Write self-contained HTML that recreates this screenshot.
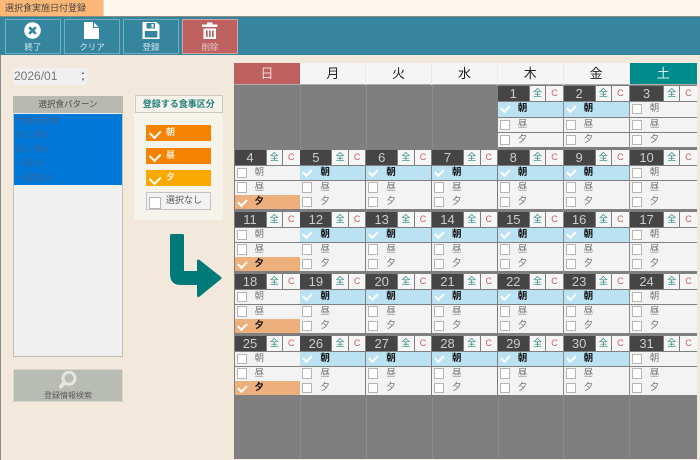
<!DOCTYPE html>
<html lang="ja"><head><meta charset="utf-8"><title>選択食実施日付登録</title>
<style>
*{box-sizing:border-box;margin:0;padding:0}
html,body{width:700px;height:460px;overflow:hidden}
body{position:relative;background:#f2e9dc;font-family:"Liberation Sans","Noto Sans CJK JP",sans-serif;font-size:10px;color:#555}
.abs,.btn,.d,.hd{position:absolute}
#top{position:absolute;left:0;top:0;width:700px;height:16px;background:#fdf9ee}
#tab{position:absolute;left:0;top:0;width:104px;height:16px;background:#fdb877;border-right:1px solid #e8d8c0;font-size:9px;line-height:16px;padding-left:5px;color:#444}
#bar{position:absolute;left:0;top:16px;width:700px;height:39px;background:#35859e;border-top:1px solid #8b8b83}
.btn{top:19px;width:56px;height:35px;border:1px solid #72aebd;color:#d5e8ee;font-size:8.500px;text-align:center;padding-top:22px;line-height:11px}
.btn svg{position:absolute;left:0;top:0}
#lft{position:absolute;left:0;top:55px;width:1px;height:405px;background:#8b8b83}
#date{left:13px;top:68px;width:74px;height:17px;background:#f0f0f0;font-size:12px;line-height:17px;padding-left:1px;color:#777}
#spin{left:80px;top:68px;width:6px;height:17px;font-size:5px;line-height:7px;color:#666;text-align:center;padding-top:2px}
#lh{left:13px;top:96px;width:110px;height:17px;background:#b8bab2;font-size:8.500px;line-height:17px;text-align:center;color:#4f4f4f}
#ls{left:13px;top:113px;width:110px;height:243.500px;background:#f0f0f0;border:1px solid #c4c0b6;border-top:0}
#sel{left:14px;top:113.500px;width:108px;height:71.500px;background:#0078d7;color:#33659f;font-size:9px;line-height:14.300px;padding-left:1px}
#srch{left:13px;top:369px;width:110px;height:33px;background:#b9bcb4;border:1px solid #d8d6cb;text-align:center;font-size:8px;color:#5c5c5c;padding-top:20px;line-height:11px}
#pn{left:134px;top:95px;width:89px;height:125px;background:#f6f3ea}
#pt{left:134.500px;top:95px;width:88.500px;height:18px;background:#f5f3ea;border:1px solid #c9c9c2;color:#227f7b;font-weight:bold;font-size:9px;line-height:16px;text-align:center}
.mb{left:146px;width:65px;height:16px;background:#f58300;color:#fdeed8;font-size:9px;line-height:15px;padding-left:20px;font-weight:bold}
.mb:before{content:"";position:absolute;left:3.500px;top:4.700px;width:8px;height:5.500px;border:solid #fff;border-width:0 0 2.500px 2.500px;transform:rotate(-45deg)}
#no{left:146px;top:192px;width:65px;height:17.500px;background:#f2f2f2;border:1px solid #c4c4c4;color:#555;font-size:9px;line-height:15px;padding-left:19px}
#no:before{content:"";position:absolute;left:2px;top:4px;width:9.500px;height:9.500px;background:#fff;border:1px solid #b5b5b5}
#cal{left:234px;top:85px;width:463px;height:374px;background:#7f7f7f}
.v{position:absolute;top:85px;height:374px;width:1px;background:#8c8c8c}
.hd{top:63px;width:65px;height:22px;background:#f5f5f5;border-bottom:1px solid #aaa;color:#222;font-size:13px;line-height:21px;text-align:center}
.d{width:65px;height:61px;background:#7f7f7f}
.d b,.d i,.d u,.d p{position:absolute;font-style:normal;text-decoration:none}
.d b{left:0;top:0;width:31px;height:15px;background:#454545;color:#ccc;font-weight:normal;font-size:13px;line-height:15px;text-align:center}
.d i,.d u{top:0;height:15px;background:#f6f6f6;font-size:9px;line-height:15px;text-align:center}
.d i{left:32px;width:15.500px;color:#24857f}
.d u{left:48.500px;width:16.500px;color:#c9605f}
.d p{left:0;width:65px;height:14px;background:#f3f3f3;color:#777;font-size:9.500px;line-height:14px;padding-left:20px}
.d p:nth-of-type(1){top:16px}.d p:nth-of-type(2){top:30.700px}.d p:nth-of-type(3){top:45.300px}
.r0 p:nth-of-type(1){height:15px}.r0 p:nth-of-type(2){top:32px}.r0 p:nth-of-type(3){top:47px}
.d s{position:absolute;left:2px;top:1.500px;width:10px;height:10.500px;background:#fff;border:1px solid #b5b5b5;text-decoration:none}
.wk p:nth-of-type(1),.sun p:nth-of-type(3){color:#111;font-weight:bold}
.wk p:nth-of-type(1){background:#bbe2f2}
.sun p:nth-of-type(3){background:#edb07c}
.wk p:nth-of-type(1) s,.sun p:nth-of-type(3) s{background:none;border:solid #fff;border-width:0 0 2.700px 2.700px;width:8.500px;height:6px;top:3.300px;left:3px;transform:rotate(-45deg)}
.c0{left:234.500px}.c1{left:300.400px}.c2{left:366.200px}.c3{left:432px}.c4{left:497.800px}.c5{left:563.600px}.c6{left:629.800px;width:67px}
.c6 b{width:33.500px}.c6 i{left:34.200px}.c6 u{left:50.300px;width:16.700px}.c6 p{width:67px}
.r0{top:86px}.r1{top:150px}.r2{top:212px}.r3{top:274px}.r4{top:336px}
</style></head><body>
<div id="top"></div><div id="tab">選択食実施日付登録</div>
<div id="bar"></div><div id="lft"></div>
<div class="btn" style="left:5px"><svg width="54" height="33"><circle cx="26.500" cy="10.500" r="8.300" fill="#fff"/><path d="M23.200 7.200l6.600 6.600M29.800 7.200l-6.600 6.600" stroke="#35859e" stroke-width="2.600"/></svg>終了</div>
<div class="btn" style="left:64px"><svg width="54" height="33"><path d="M19 2h9.500L34 7.500V19H19z" fill="#fff"/><path d="M28.500 2V7.500H34" fill="none" stroke="#35859e" stroke-width="1"/></svg>クリア</div>
<div class="btn" style="left:123px"><svg width="54" height="33"><path d="M18.500 2h14l3 3v14h-17z" fill="#fff"/><path d="M20.800 11h12.500v6.500H20.800z" fill="#35859e"/><path d="M22.500 3h8.500v5.500h-8.500z" fill="#35859e"/><path d="M27.500 4h2v3.500h-2z" fill="#fff"/></svg>登録</div>
<div class="btn" style="left:182px;background:#bf6060;border-color:#d9a0a0;color:#e8c8c8"><svg width="54" height="33"><path d="M19 4.500h15.500v2.500H19zM24 2.500h5.500v2H24zM20.500 8.500h12.500V19H20.500z" fill="#fff"/><path d="M23 10.500h1.700v6.500H23zM26 10.500h1.700v6.500H26zM29 10.500h1.700v6.500H29z" fill="#bf6060"/></svg>削除</div>
<div class="abs" id="date">2026/01</div><div class="abs" id="spin">▴<br>▾</div>
<div class="abs" id="ls"></div><div class="abs" id="lh">選択食パターン</div>
<div class="abs" id="sel">学齢前期食<br>成人食B<br>成人食A<br>一般16<br>一般塩16</div>
<div class="abs" id="srch"><svg class="abs" style="left:45px;top:1px" width="20" height="20"><circle cx="10" cy="7.300" r="6" fill="none" stroke="#e6e6e0" stroke-width="3"/><path d="M5 12l-3 3.500" stroke="#e6e6e0" stroke-width="4" stroke-linecap="round"/></svg>登録情報検索</div>
<div class="abs" id="pn"></div><div class="abs" id="pt">登録する食事区分</div>
<div class="abs mb" style="top:124.500px">朝</div><div class="abs mb" style="top:147.500px">昼</div><div class="abs mb" style="top:170px;background:#f9a800">夕</div>
<div class="abs" id="no">選択なし</div>
<svg class="abs" style="left:0;top:0" width="234" height="310"><path d="M171.500 235.500H182.500V272.500H198.500V261L220 278L198.500 295.500V283.500H181Q171.500 283.500 171.500 274Z" fill="#007a78" stroke="#007a78" stroke-width="3" stroke-linejoin="round"/></svg>
<div class="abs" id="cal"></div>
<div class="v" style="left:300px"></div><div class="v" style="left:366px"></div><div class="v" style="left:432px"></div><div class="v" style="left:498px"></div><div class="v" style="left:563px"></div><div class="v" style="left:629px"></div>
<div class="hd c0" style="left:234px;width:66px;background:#bf6060;color:#f0d8d8">日</div><div class="hd c1">月</div><div class="hd c2">火</div><div class="hd c3">水</div><div class="hd c4">木</div><div class="hd c5">金</div><div class="hd c6" style="background:#008c8c;color:#d8eeee">土</div>
<div class="d c4 r0 wk"><b>1</b><i>全</i><u>C</u><p><s></s>朝</p><p><s></s>昼</p><p><s></s>夕</p></div>
<div class="d c5 r0 wk"><b>2</b><i>全</i><u>C</u><p><s></s>朝</p><p><s></s>昼</p><p><s></s>夕</p></div>
<div class="d c6 r0"><b>3</b><i>全</i><u>C</u><p><s></s>朝</p><p><s></s>昼</p><p><s></s>夕</p></div>
<div class="d c0 r1 sun"><b>4</b><i>全</i><u>C</u><p><s></s>朝</p><p><s></s>昼</p><p><s></s>夕</p></div>
<div class="d c1 r1 wk"><b>5</b><i>全</i><u>C</u><p><s></s>朝</p><p><s></s>昼</p><p><s></s>夕</p></div>
<div class="d c2 r1 wk"><b>6</b><i>全</i><u>C</u><p><s></s>朝</p><p><s></s>昼</p><p><s></s>夕</p></div>
<div class="d c3 r1 wk"><b>7</b><i>全</i><u>C</u><p><s></s>朝</p><p><s></s>昼</p><p><s></s>夕</p></div>
<div class="d c4 r1 wk"><b>8</b><i>全</i><u>C</u><p><s></s>朝</p><p><s></s>昼</p><p><s></s>夕</p></div>
<div class="d c5 r1 wk"><b>9</b><i>全</i><u>C</u><p><s></s>朝</p><p><s></s>昼</p><p><s></s>夕</p></div>
<div class="d c6 r1"><b>10</b><i>全</i><u>C</u><p><s></s>朝</p><p><s></s>昼</p><p><s></s>夕</p></div>
<div class="d c0 r2 sun"><b>11</b><i>全</i><u>C</u><p><s></s>朝</p><p><s></s>昼</p><p><s></s>夕</p></div>
<div class="d c1 r2 wk"><b>12</b><i>全</i><u>C</u><p><s></s>朝</p><p><s></s>昼</p><p><s></s>夕</p></div>
<div class="d c2 r2 wk"><b>13</b><i>全</i><u>C</u><p><s></s>朝</p><p><s></s>昼</p><p><s></s>夕</p></div>
<div class="d c3 r2 wk"><b>14</b><i>全</i><u>C</u><p><s></s>朝</p><p><s></s>昼</p><p><s></s>夕</p></div>
<div class="d c4 r2 wk"><b>15</b><i>全</i><u>C</u><p><s></s>朝</p><p><s></s>昼</p><p><s></s>夕</p></div>
<div class="d c5 r2 wk"><b>16</b><i>全</i><u>C</u><p><s></s>朝</p><p><s></s>昼</p><p><s></s>夕</p></div>
<div class="d c6 r2"><b>17</b><i>全</i><u>C</u><p><s></s>朝</p><p><s></s>昼</p><p><s></s>夕</p></div>
<div class="d c0 r3 sun"><b>18</b><i>全</i><u>C</u><p><s></s>朝</p><p><s></s>昼</p><p><s></s>夕</p></div>
<div class="d c1 r3 wk"><b>19</b><i>全</i><u>C</u><p><s></s>朝</p><p><s></s>昼</p><p><s></s>夕</p></div>
<div class="d c2 r3 wk"><b>20</b><i>全</i><u>C</u><p><s></s>朝</p><p><s></s>昼</p><p><s></s>夕</p></div>
<div class="d c3 r3 wk"><b>21</b><i>全</i><u>C</u><p><s></s>朝</p><p><s></s>昼</p><p><s></s>夕</p></div>
<div class="d c4 r3 wk"><b>22</b><i>全</i><u>C</u><p><s></s>朝</p><p><s></s>昼</p><p><s></s>夕</p></div>
<div class="d c5 r3 wk"><b>23</b><i>全</i><u>C</u><p><s></s>朝</p><p><s></s>昼</p><p><s></s>夕</p></div>
<div class="d c6 r3"><b>24</b><i>全</i><u>C</u><p><s></s>朝</p><p><s></s>昼</p><p><s></s>夕</p></div>
<div class="d c0 r4 sun"><b>25</b><i>全</i><u>C</u><p><s></s>朝</p><p><s></s>昼</p><p><s></s>夕</p></div>
<div class="d c1 r4 wk"><b>26</b><i>全</i><u>C</u><p><s></s>朝</p><p><s></s>昼</p><p><s></s>夕</p></div>
<div class="d c2 r4 wk"><b>27</b><i>全</i><u>C</u><p><s></s>朝</p><p><s></s>昼</p><p><s></s>夕</p></div>
<div class="d c3 r4 wk"><b>28</b><i>全</i><u>C</u><p><s></s>朝</p><p><s></s>昼</p><p><s></s>夕</p></div>
<div class="d c4 r4 wk"><b>29</b><i>全</i><u>C</u><p><s></s>朝</p><p><s></s>昼</p><p><s></s>夕</p></div>
<div class="d c5 r4 wk"><b>30</b><i>全</i><u>C</u><p><s></s>朝</p><p><s></s>昼</p><p><s></s>夕</p></div>
<div class="d c6 r4"><b>31</b><i>全</i><u>C</u><p><s></s>朝</p><p><s></s>昼</p><p><s></s>夕</p></div>
</body></html>
